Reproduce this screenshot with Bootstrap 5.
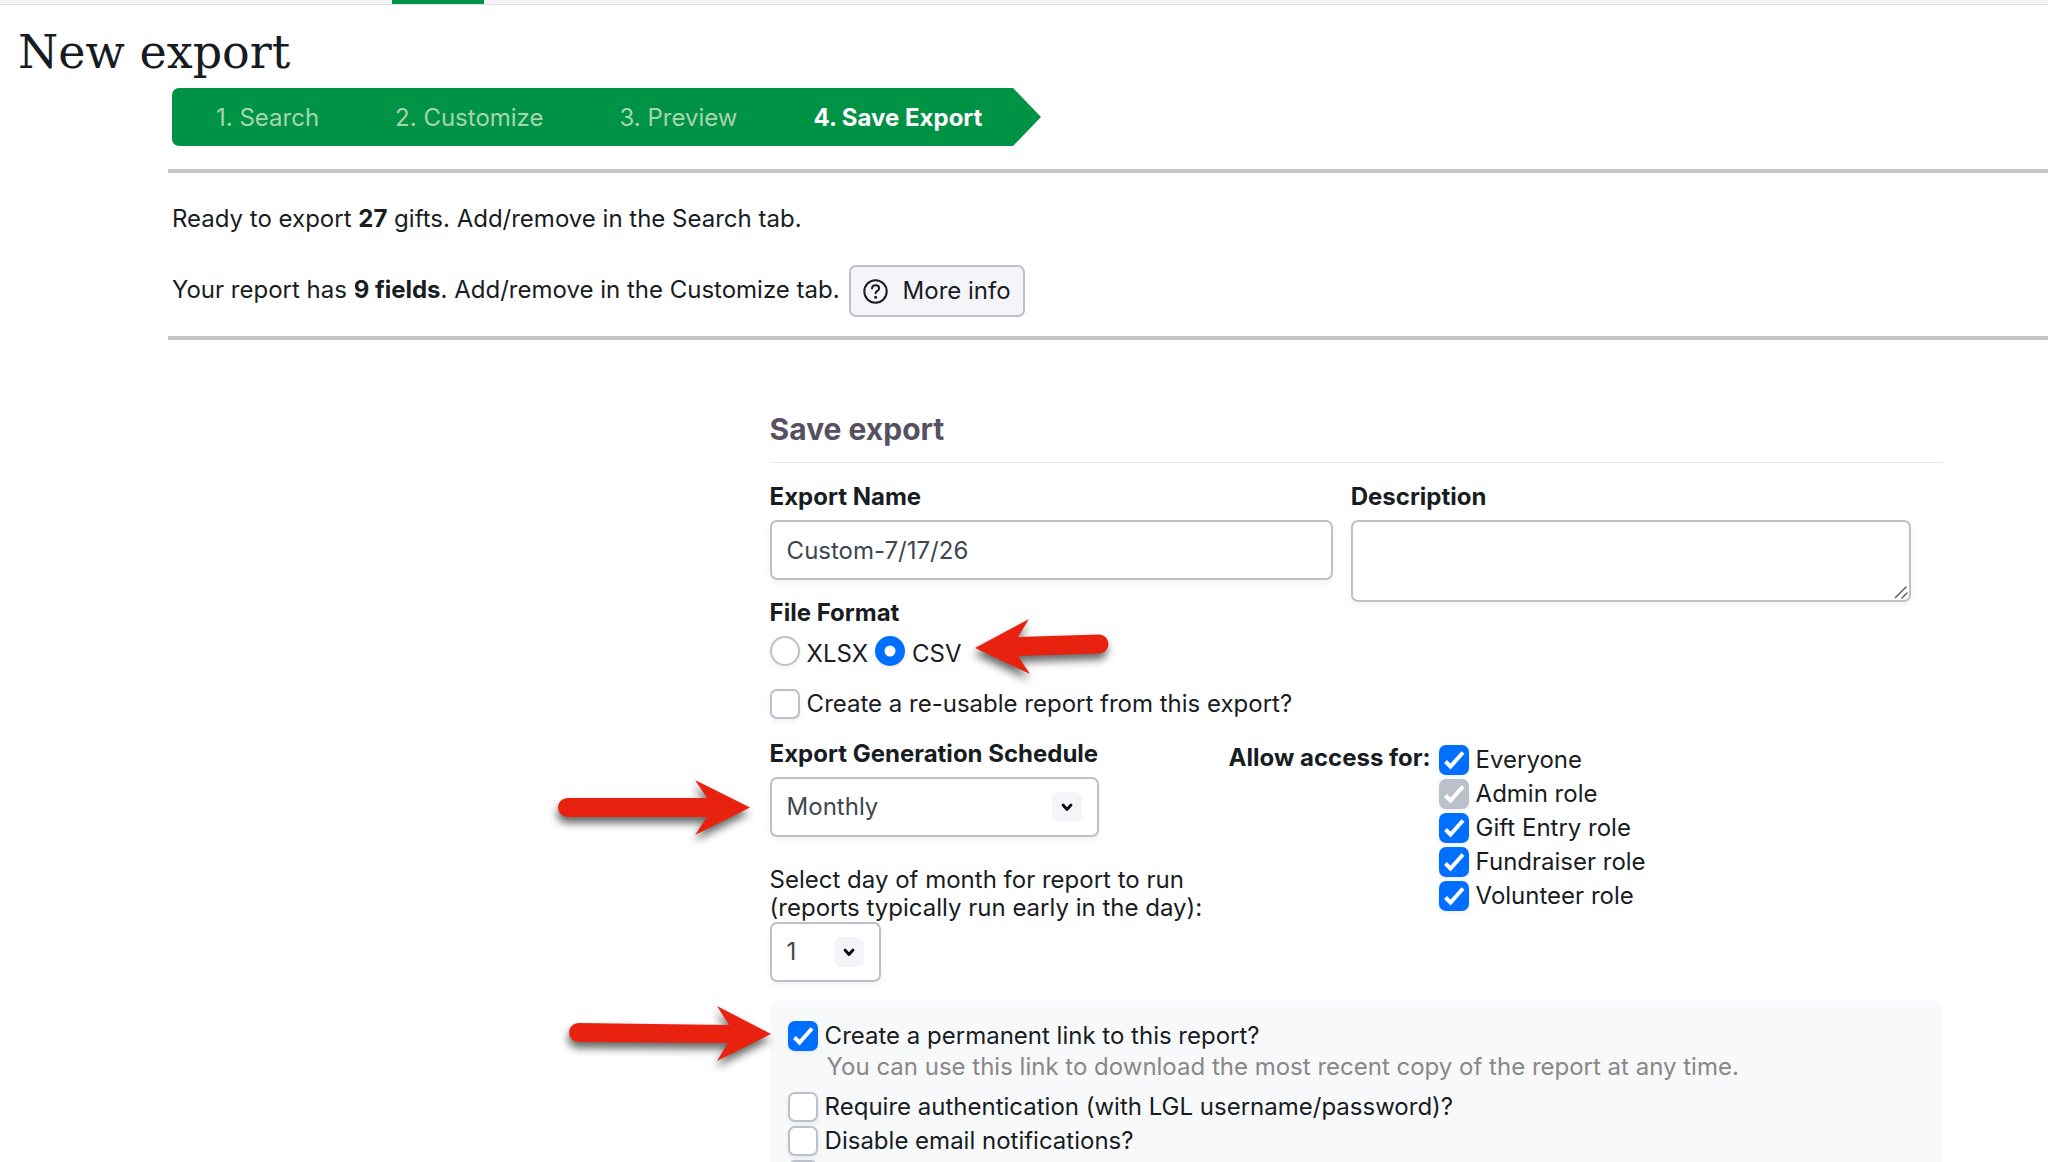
<!DOCTYPE html>
<html lang="en">
<head>
<meta charset="utf-8">
<meta name="viewport" content="width=device-width, initial-scale=1">
<title>New export</title>
<link href="https://cdn.jsdelivr.net/npm/bootstrap@5.3.0/dist/css/bootstrap.min.css" rel="stylesheet">
<style>
:root{--ink:#181c23;--field:#3e4651;--line:#bbc1cb;--green:#009245;--blue:#006fff;--red:#e8220f}
body{font:400 24px/28px Inter,"Liberation Sans",sans-serif;color:var(--ink);background:#fff}
.topnav{height:5px;background:#f3f4f6;border-bottom:1px solid #dcdfe4;padding-left:392px}
.topnav a{width:92px;height:4px;background:var(--green)}
.page-title{font:400 46px/56px "DejaVu Serif",serif;padding:19px 0 8px 18px;margin:0;color:#171c24}
.export-body{margin-left:168px}
.steps{width:869px;height:58px;margin-left:4px;background:var(--green);border-radius:7px 0 0 7px;clip-path:polygon(0 0,calc(100% - 28px) 0,100% 50%,calc(100% - 28px) 100%,0 100%);padding:2px 0 0 44px;gap:76px}
.steps a{color:#a6d6ae;text-decoration:none;white-space:nowrap}
.steps a.current{color:#fff;font-weight:700}
.summary{border-top:4px solid #c6c6c6;border-bottom:4px solid #c6c6c6;margin-top:23px;padding:32px 4px 19px}
.summary p{margin:0 0 32px}
.summary-line{gap:9px}
.summary-line span{padding-bottom:2px}
.btn-info-more{font-size:24px;line-height:28px;height:52px;padding:0 12px;gap:15px;background:#f4f5f8;border:2px solid var(--line);border-radius:7px;color:var(--ink)}
.save-form{margin:71px 5.6% 0 32%}
.save-form h2{font-size:30px;line-height:36px;font-weight:700;color:#565061;margin:0 0 20px;padding-bottom:15px;border-bottom:1px solid #e6e6ee}
.field-label{display:block;float:none;font-size:24px;font-weight:700;margin:0 0 9px;line-height:28px}
.field-columns{gap:18px}
.name-col{width:48%}
.desc-col{width:560px}
.format-set{margin-top:19px}
.form-control,.form-select{font-size:24px;line-height:28px;color:var(--field);border:2px solid var(--line);border-radius:7px;padding:14px 15px;height:60px;box-shadow:0 3px 6px rgba(30,40,60,.06)}
textarea.form-control{height:82px;min-height:82px}
textarea.form-control::-webkit-resizer{background:url("data:image/svg+xml,%3Csvg xmlns='http://www.w3.org/2000/svg' width='15' height='15' viewBox='0 0 15 15'%3E%3Cpath d='M1.500 12.500L12 2M8 13l5-5' fill='none' stroke='%23666' stroke-width='1.600' stroke-linecap='round'/%3E%3C/svg%3E") right bottom no-repeat}
.form-select{background-image:url("data:image/svg+xml,%3Csvg xmlns='http://www.w3.org/2000/svg' viewBox='0 0 30 30'%3E%3Crect width='30' height='30' rx='7' fill='%23f4f5f8'/%3E%3Cpath d='M11 13l4 4.500 4-4.500' fill='none' stroke='%23080b12' stroke-width='2.800' stroke-linecap='round' stroke-linejoin='round'/%3E%3C/svg%3E");background-size:30px 30px;background-position:right 15px center}
.schedule-select{width:329px}
.day-select{width:111px}
.day-label{display:block;margin-top:29px;white-space:nowrap}
.choice{display:flex;align-items:flex-start;gap:7px}
.choice label{line-height:30px;white-space:nowrap}
.choice .form-check-input{flex:none;width:30px;height:30px;margin:0;border:2px solid var(--line);box-shadow:0 2px 5px rgba(30,40,60,.08)}
.choice .form-check-input[type=checkbox]{border-radius:7px;background-origin:border-box}
.choice .form-check-input:checked{background-color:var(--blue);border-color:var(--blue)}
.choice .form-check-input[type=checkbox]:checked{background-size:30px 30px;background-image:url("data:image/svg+xml,%3Csvg xmlns='http://www.w3.org/2000/svg' viewBox='0 0 30 30'%3E%3Cpath d='M6.500 16.500l5 5L24 7.500' fill='none' stroke='%23fff' stroke-width='4'/%3E%3C/svg%3E")}
.choice .form-check-input[type=radio]:checked{background-size:26px 26px;background-image:url("data:image/svg+xml,%3Csvg xmlns='http://www.w3.org/2000/svg' viewBox='0 0 26 26'%3E%3Ccircle cx='13' cy='13' r='5.500' fill='%23fff'/%3E%3C/svg%3E")}
.choice .form-check-input:disabled,.choice .form-check-input:disabled:checked{opacity:1;background-color:var(--line);border-color:var(--line)}
.choice .form-check-input:disabled~label{opacity:1}
.format-row{gap:7px;margin-bottom:20px}
.format-row label{padding-top:3px}
.schedule-row{margin-top:21px}
.schedule-col{width:459px}
.access-col{gap:8px;padding-top:4px}
.access-list{display:grid;gap:4px;padding-top:1px}
.link-panel{background:#f8f9fb;border-radius:8px 8px 0 0;margin-top:19px;padding:20px 18px 40px}
.link-panel .help-line{color:#888;margin:2px 0 11px 39px}
.link-options{display:grid;gap:4px}
.pointer{position:absolute;overflow:visible;pointer-events:none;fill:var(--red);filter:drop-shadow(-1px 6px 4px rgba(0,0,0,.6))}
.pointer-format{left:205px;top:-17px}
.pointer-schedule{right:calc(100% + 20px);top:3px}
.pointer-link{right:calc(100% + 17px);top:-15px}
</style>
<script src="https://cdn.jsdelivr.net/npm/bootstrap@5.3.0/dist/js/bootstrap.bundle.min.js"></script>
</head>
<body>
<div class="vh-100 overflow-hidden">
  <nav class="topnav" aria-label="Main"><a href="#" class="d-block" aria-label="Current section"></a></nav>
  <h1 class="page-title">New export</h1>
  <main class="export-body">
    <nav class="steps d-flex align-items-center" aria-label="Export steps">
      <a href="#">1. Search</a><a href="#">2. Customize</a><a href="#">3. Preview</a><a href="#" class="current" aria-current="step">4. Save Export</a>
    </nav>
    <section class="summary">
      <p>Ready to export <b>27</b> gifts. Add/remove in the Search tab.</p>
      <div class="summary-line d-flex align-items-center">
        <span>Your report has <b>9 fields</b>. Add/remove in the Customize tab.</span>
        <button type="button" class="btn btn-info-more d-flex align-items-center">
          <svg width="25" height="25" viewBox="0 0 25 25" fill="none" stroke="currentColor" stroke-width="2" stroke-linecap="round" aria-hidden="true"><circle cx="12.500" cy="12.500" r="11.200"/><path d="M9 9.400C9.200 7.500 10.600 6.300 12.600 6.300s3.500 1.300 3.500 3.100c0 2.400-3.500 2.500-3.500 4.900"/><circle cx="12.600" cy="18.200" r="1.500" fill="currentColor" stroke="none"/></svg>
          More info</button>
      </div>
    </section>

    <form class="save-form">
      <h2>Save export</h2>
      <div class="field-columns d-flex align-items-start">
        <div class="name-col">
          <label class="field-label" for="name">Export Name</label>
          <input type="text" class="form-control" id="name" value="Custom-7/17/26">
          <fieldset class="format-set">
            <legend class="field-label">File Format</legend>
            <div class="format-row d-flex position-relative">
              <div class="choice"><input class="form-check-input" type="radio" name="format" id="xlsx"><label for="xlsx">XLSX</label></div>
              <div class="choice"><input class="form-check-input" type="radio" name="format" id="csv" checked><label for="csv">CSV</label></div>
              <svg class="pointer pointer-format" width="133" height="55" aria-hidden="true"><path d="M0 29L54 0 43 18 124 15.500A9.500 9.500 0 0 1 124 34.500L43 37 55 55Z"/></svg>
            </div>
          </fieldset>
          <div class="choice"><input class="form-check-input" type="checkbox" id="reuse"><label for="reuse">Create a re-usable report from this export?</label></div>
        </div>
        <div class="desc-col">
          <label class="field-label" for="desc">Description</label>
          <textarea class="form-control" id="desc"></textarea>
        </div>
      </div>

      <div class="schedule-row d-flex align-items-start">
        <div class="schedule-col">
          <label class="field-label" for="schedule">Export Generation Schedule</label>
          <div class="position-relative">
            <select class="form-select schedule-select" id="schedule"><option>Monthly</option></select>
            <svg class="pointer pointer-schedule" width="192" height="55" aria-hidden="true"><path d="M9.500 18H149L137 0 192 27.500 137 55 149 37H9.500A9.500 9.500 0 0 1 9.500 18Z"/></svg>
          </div>
          <label for="day" class="day-label">Select day of month for report to run<br>(reports typically run early in the day):</label>
          <select class="form-select day-select" id="day"><option>1</option></select>
        </div>
        <div class="access-col d-flex" role="group" aria-labelledby="access">
          <span class="fw-bold text-nowrap" id="access">Allow access for:</span>
          <div class="access-list">
            <div class="choice"><input class="form-check-input" type="checkbox" id="r1" checked><label for="r1">Everyone</label></div>
            <div class="choice"><input class="form-check-input" type="checkbox" id="r2" checked disabled><label for="r2">Admin role</label></div>
            <div class="choice"><input class="form-check-input" type="checkbox" id="r3" checked><label for="r3">Gift Entry role</label></div>
            <div class="choice"><input class="form-check-input" type="checkbox" id="r4" checked><label for="r4">Fundraiser role</label></div>
            <div class="choice"><input class="form-check-input" type="checkbox" id="r5" checked><label for="r5">Volunteer role</label></div>
          </div>
        </div>
      </div>

      <div class="link-panel">
        <div class="choice position-relative"><input class="form-check-input" type="checkbox" id="perm" checked><label for="perm">Create a permanent link to this report?</label>
          <svg class="pointer pointer-link" width="202" height="55" aria-hidden="true"><path d="M9.500 17L160 19 148 0 202 28 148 55 159 37 9.500 36A9.500 9.500 0 0 1 9.500 17Z"/></svg>
        </div>
        <p class="help-line">You can use this link to download the most recent copy of the report at any time.</p>
        <div class="link-options">
          <div class="choice"><input class="form-check-input" type="checkbox" id="auth"><label for="auth">Require authentication (with LGL username/password)?</label></div>
          <div class="choice"><input class="form-check-input" type="checkbox" id="mail"><label for="mail">Disable email notifications?</label></div>
          <div class="choice"><input class="form-check-input" type="checkbox" disabled aria-label="More options"></div>
        </div>
      </div>
    </form>
  </main>
</div>
</body>
</html>
